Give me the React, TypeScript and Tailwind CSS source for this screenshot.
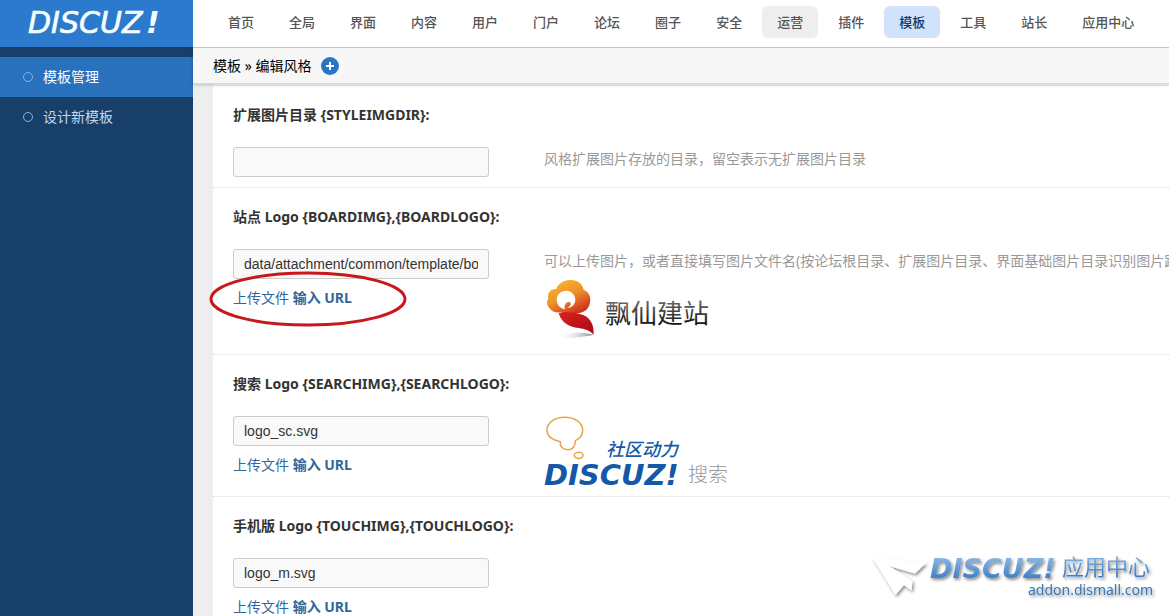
import React from "react";

const UI = "font-['Noto_Sans','Noto_Sans_CJK_SC',sans-serif]";

const NAV = [
  "首页", "全局", "界面", "内容", "用户", "门户", "论坛", "圈子",
  "安全", "运营", "插件", "模板", "工具", "站长", "应用中心",
];

function navStyle(item: string) {
  if (item === "模板") return "bg-[#d0e3fb] text-[#123a66]";
  if (item === "运营") return "bg-[#eeeeee] text-[#555555]";
  return "text-[#555555]";
}

function SideItem({ label, active }: { label: string; active?: boolean }) {
  return (
    <a
      href="#"
      className={`flex h-10 items-center gap-2.5 pl-[23px] text-sm ${
        active ? "bg-[#2970bd] text-white" : "text-[#c3d6ea]"
      }`}
    >
      <span className="size-2.5 rounded-full border border-[#8bb2dc]" />
      {label}
    </a>
  );
}

function Brand() {
  return (
    <svg viewBox="0 0 193 47" className="h-[47px] w-[193px]" role="img" aria-label="Discuz!">
      <text x="28" y="33" fontFamily="DejaVu Sans" fontStyle="italic" fontSize="30" fill="#f4fdff" stroke="#f4fdff" strokeWidth="0.7">
        DISCUZ
      </text>
      <text x="146" y="33" fontFamily="DejaVu Sans" fontStyle="italic" fontWeight="700" fontSize="30" fill="#f4fdff">
        !
      </text>
    </svg>
  );
}

function SiteLogo() {
  return (
    <svg viewBox="0 0 200 71" className="block h-[71px] w-[200px] overflow-visible" role="img" aria-label="飘仙建站">
      <defs>
        <linearGradient id="cloud" x1="0.2" y1="0" x2="0.8" y2="1">
          <stop offset="0" stopColor="#f9b82f" />
          <stop offset="0.5" stopColor="#ee8d2a" />
          <stop offset="1" stopColor="#c9251e" />
        </linearGradient>
        <linearGradient id="tail" x1="0" y1="0" x2="1" y2="1">
          <stop offset="0" stopColor="#d8281f" />
          <stop offset="0.5" stopColor="#c4121c" />
          <stop offset="1" stopColor="#a50f18" />
        </linearGradient>
        <linearGradient id="ink" x1="0" y1="0" x2="0" y2="1">
          <stop offset="0.2" stopColor="#6b6b6b" />
          <stop offset="0.85" stopColor="#141414" />
        </linearGradient>
        <linearGradient id="floor" x1="0" y1="0" x2="1" y2="0">
          <stop offset="0" stopColor="#ffffff" stopOpacity="0" />
          <stop offset="1" stopColor="#8a8a8a" />
        </linearGradient>
      </defs>
      <g transform="scale(0.3333) translate(-42 -99)">
        <path d="M84 294C105 280 140 272 191 284C165 290 125 296 84 294Z" fill="url(#floor)" />
        <path
          d="M120 120C142 119 158 132 161 149C176 155 184 170 180 188C177 205 165 216 148 219C126 222 108 220 92 217C76 219 66 215 62 208C50 200 49 185 55 175C51 158 62 146 79 147C83 131 101 121 120 120Z"
          fill="url(#cloud)"
        />
        <path
          d="M80 180C80 164 92 152 108 152C124 152 136 164 136 180C135 194 126 203 112 204C118 200 124 196 122 190C120 185 112 185 107 191C102 198 103 204 106 208C92 206 81 196 80 180Z"
          fill="#ffffff"
        />
        <path d="M86 220C105 213 128 217 150 222C178 229 193 250 191 284C180 271 164 267 146 264C116 262 93 246 86 220Z" fill="url(#tail)" />
      </g>
      <text x="61" y="50" fontFamily="Noto Sans CJK SC" fontSize="26" fill="url(#ink)">
        飘仙建站
      </text>
    </svg>
  );
}

function SearchLogo() {
  return (
    <svg viewBox="0 0 200 70" className="block h-[70px] w-[200px] overflow-visible" role="img" aria-label="Discuz! 搜索">
      <g transform="scale(0.3333) translate(-42 -48)" fill="none" stroke="#e5a548" strokeWidth="4.5">
        <path d="M91 125C66 120 51 108 51 90C51 68 75 52 104 52C134 52 158 68 158 90C158 106 149 116 136 122C137 138 128 149 114 149C99 149 89 140 91 125Z" />
        <ellipse cx="146" cy="166" rx="13" ry="9.5" />
      </g>
      <text x="62" y="40" fontFamily="Noto Sans CJK SC" fontStyle="italic" fontWeight="500" fontSize="18" fill="#1459a8">
        社区动力
      </text>
      <text x="0" y="69" fontFamily="DejaVu Sans" fontStyle="italic" fontWeight="700" fontSize="29" fill="#1459a8">
        DISCUZ!
      </text>
      <text x="144" y="66" fontFamily="Noto Sans CJK SC" fontWeight="300" fontSize="20" fill="#999999">
        搜索
      </text>
    </svg>
  );
}

function Watermark() {
  return (
    <svg viewBox="0 0 309 76" className="pointer-events-none absolute right-0 bottom-0 h-[76px] w-[309px]" role="img" aria-label="Discuz! 应用中心">
      <defs>
        <linearGradient id="sky" x1="0" y1="0" x2="0" y2="1">
          <stop offset="0.2" stopColor="#83b3e3" />
          <stop offset="0.85" stopColor="#3c7dc2" />
        </linearGradient>
        <filter id="drop" x="-10%" y="-20%" width="120%" height="150%">
          <feDropShadow dx="1.5" dy="2" stdDeviation="1.8" floodColor="#000" floodOpacity="0.45" />
        </filter>
      </defs>
      <g filter="url(#drop)">
        <path d="M12 17L66 23L55 33.500L29 26L52.500 41L51.500 50.500L44 45L35.500 55Z" fill="#ffffff" />
        <text x="70" y="38" fontFamily="DejaVu Sans" fontStyle="italic" fontWeight="700" fontSize="27" fill="url(#sky)">
          DISCUZ!
        </text>
        <text x="202" y="35" fontFamily="Noto Sans CJK SC" fontSize="22" fill="url(#sky)">
          应用中心
        </text>
        <text x="168" y="55" fontFamily="Noto Sans" fontSize="14" fill="#3a76b0">
          addon.dismall.com
        </text>
      </g>
    </svg>
  );
}

type RowProps = {
  id: string;
  title: string;
  value: string;
  upload?: boolean;
  circled?: boolean;
  children?: React.ReactNode;
};

function SettingRow({ id, title, value, upload, circled, children }: RowProps) {
  return (
    <section className="border-b border-dotted border-[#dddddd] px-5 pt-[18px] pb-2.5">
      <label htmlFor={id} className="mb-[21px] block text-sm leading-[22px] font-bold whitespace-nowrap text-[#333333]">
        {title}
      </label>
      <div className="flex">
        <div className="w-[311px] shrink-0">
          <input
            id={id}
            type="text"
            defaultValue={value}
            className="block h-[30px] w-64 rounded-[3px] border border-[#cccccc] bg-[#f9f9f9] px-2.5 font-['Liberation_Sans',sans-serif] text-sm text-[#333333] outline-none"
          />
          {upload && (
            <div className="relative mt-2 h-[22px] w-64 text-sm leading-[22px] whitespace-nowrap text-[#336699]">
              <a href="#">上传文件</a>{" "}
              <a href="#" className="font-bold">输入 URL</a>
              {circled && (
                <svg viewBox="0 0 200 58" className="pointer-events-none absolute -top-[17px] -left-6 h-[58px] w-[200px]" aria-hidden="true">
                  <ellipse cx="99" cy="29" rx="97" ry="26" fill="none" stroke="#c8181c" strokeWidth="3" />
                </svg>
              )}
            </div>
          )}
        </div>
        <div className="min-w-0 flex-1 text-sm leading-6 whitespace-nowrap text-[#999999]">{children}</div>
      </div>
    </section>
  );
}

export default function App() {
  return (
    <div className={`relative flex h-screen overflow-hidden bg-white ${UI}`}>
      <aside className="w-[193px] shrink-0 bg-[#183f6a]">
        <a href="#" className="mb-2.5 block bg-[#2b7acd]">
          <Brand />
        </a>
        <nav>
          <SideItem label="模板管理" active />
          <SideItem label="设计新模板" />
        </nav>
      </aside>

      <div className="flex min-w-0 flex-1 flex-col">
        <nav className="flex h-12 shrink-0 gap-[5px] border-b border-[#cccccc] bg-white pt-1.5 pl-5">
          {NAV.map((item) => (
            <a
              key={item}
              href="#"
              className={`h-8 shrink-0 rounded-md px-[15px] text-[13px] leading-8 font-medium ${navStyle(item)} font-['Noto_Sans_CJK_SC',sans-serif]`}
            >
              {item}
            </a>
          ))}
        </nav>

        <div className="relative flex h-9 shrink-0 items-center border-b border-[#d8d8d8] bg-[#f7f7f7] pl-5 text-sm text-black shadow-[0_1px_3px_rgba(0,0,0,0.2)]">
          <span>模板 » 编辑风格</span>
          <button type="button" aria-label="添加" className="ml-2.5 size-[18px] cursor-pointer">
            <svg viewBox="0 0 18 18" className="size-[18px]">
              <circle cx="9" cy="9" r="9" fill="#2976c7" />
              <path d="M9 5v8M5 9h8" stroke="#fff" strokeWidth="2" />
            </svg>
          </button>
        </div>

        <main className="min-h-0 flex-1 overflow-hidden bg-[#eeeeee] pl-5">
          <div className="min-h-full bg-white pt-px">
            <div className="border-t border-dotted border-[#dddddd]">
              <SettingRow id="styleimgdir" title="扩展图片目录 {STYLEIMGDIR}:" value="">
                <p>风格扩展图片存放的目录，留空表示无扩展图片目录</p>
              </SettingRow>
              <SettingRow id="boardimg" title="站点 Logo {BOARDIMG},{BOARDLOGO}:" value="data/attachment/common/template/board" upload circled>
                <p>可以上传图片，或者直接填写图片文件名(按论坛根目录、扩展图片目录、界面基础图片目录识别图片路径)</p>
                <SiteLogo />
              </SettingRow>
              <SettingRow id="searchimg" title="搜索 Logo {SEARCHIMG},{SEARCHLOGO}:" value="logo_sc.svg" upload>
                <SearchLogo />
              </SettingRow>
              <SettingRow id="touchimg" title="手机版 Logo {TOUCHIMG},{TOUCHLOGO}:" value="logo_m.svg" upload />
            </div>
          </div>
        </main>
      </div>
      <Watermark />
    </div>
  );
}
